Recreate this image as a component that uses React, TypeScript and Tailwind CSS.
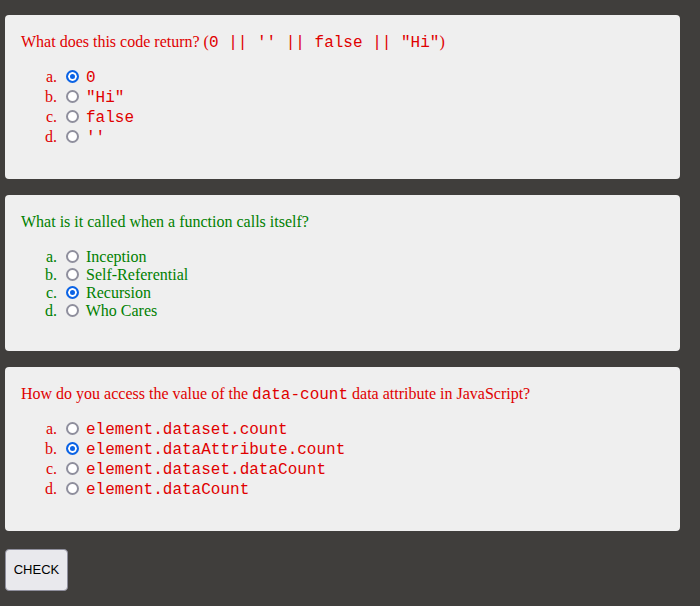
import React, { useState } from 'react';

type Question = {
  id: string;
  color: string;
  code: boolean;
  prompt: React.ReactNode;
  options: string[];
  selected: number;
};

const Code = ({ children }: { children: React.ReactNode }) => (
  <span className="font-['Liberation_Mono','Courier_New',monospace]">{children}</span>
);

const QUESTIONS: Question[] = [
  {
    id: 'q1',
    color: 'text-[#e00000]',
    code: true,
    prompt: (
      <>
        What does this code return? (<Code>0 || '' || false || "Hi"</Code>)
      </>
    ),
    options: ['0', '"Hi"', 'false', "''"],
    selected: 0,
  },
  {
    id: 'q2',
    color: 'text-[#008000]',
    code: false,
    prompt: 'What is it called when a function calls itself?',
    options: ['Inception', 'Self-Referential', 'Recursion', 'Who Cares'],
    selected: 2,
  },
  {
    id: 'q3',
    color: 'text-[#e00000]',
    code: true,
    prompt: (
      <>
        How do you access the value of the <Code>data-count</Code> data attribute in JavaScript?
      </>
    ),
    options: [
      'element.dataset.count',
      'element.dataAttribute.count',
      'element.dataset.dataCount',
      'element.dataCount',
    ],
    selected: 1,
  },
];

const QuestionCard = ({ q }: { q: Question }) => {
  const [value, setValue] = useState(q.selected);

  return (
    <div className={`mb-4 rounded-[4px] bg-[#efefef] px-4 pt-[18px] pb-8 ${q.color}`}>
      <p className="h-[18px] leading-[18px]">{q.prompt}</p>
      <ol className="mt-4 list-[lower-alpha] pl-10">
        {q.options.map((opt, i) => (
          <li key={opt} className={q.code ? 'h-5 leading-5' : 'h-[18px] leading-[18px]'}>
            <input
              type="radio"
              name={q.id}
              checked={value === i}
              onChange={() => setValue(i)}
              className="mt-[3px] mr-[3px] ml-[5px] h-[13px] w-[13px] appearance-none rounded-full border-2 border-[#8f8f9d] bg-white align-[-1px] checked:border-[#0b63e5] checked:bg-[#0b63e5] checked:shadow-[inset_0_0_0_2px_#fff]"
            />{' '}
            {q.code ? <Code>{opt}</Code> : opt}
          </li>
        ))}
      </ol>
    </div>
  );
};

export default function App() {
  return (
    <div className="min-h-screen bg-[#403e3c] px-[5px] pt-[15px] pr-5 font-['Liberation_Serif','Times_New_Roman',serif] text-base">
      {QUESTIONS.map((q) => (
        <QuestionCard key={q.id} q={q} />
      ))}
      <button className="mt-[2px] h-[42px] w-[63px] rounded-[4px] border border-[#8f8f9d] bg-[#e9e9ed] font-['Liberation_Sans',Arial,sans-serif] text-[13px] text-black">
        CHECK
      </button>
    </div>
  );
}
